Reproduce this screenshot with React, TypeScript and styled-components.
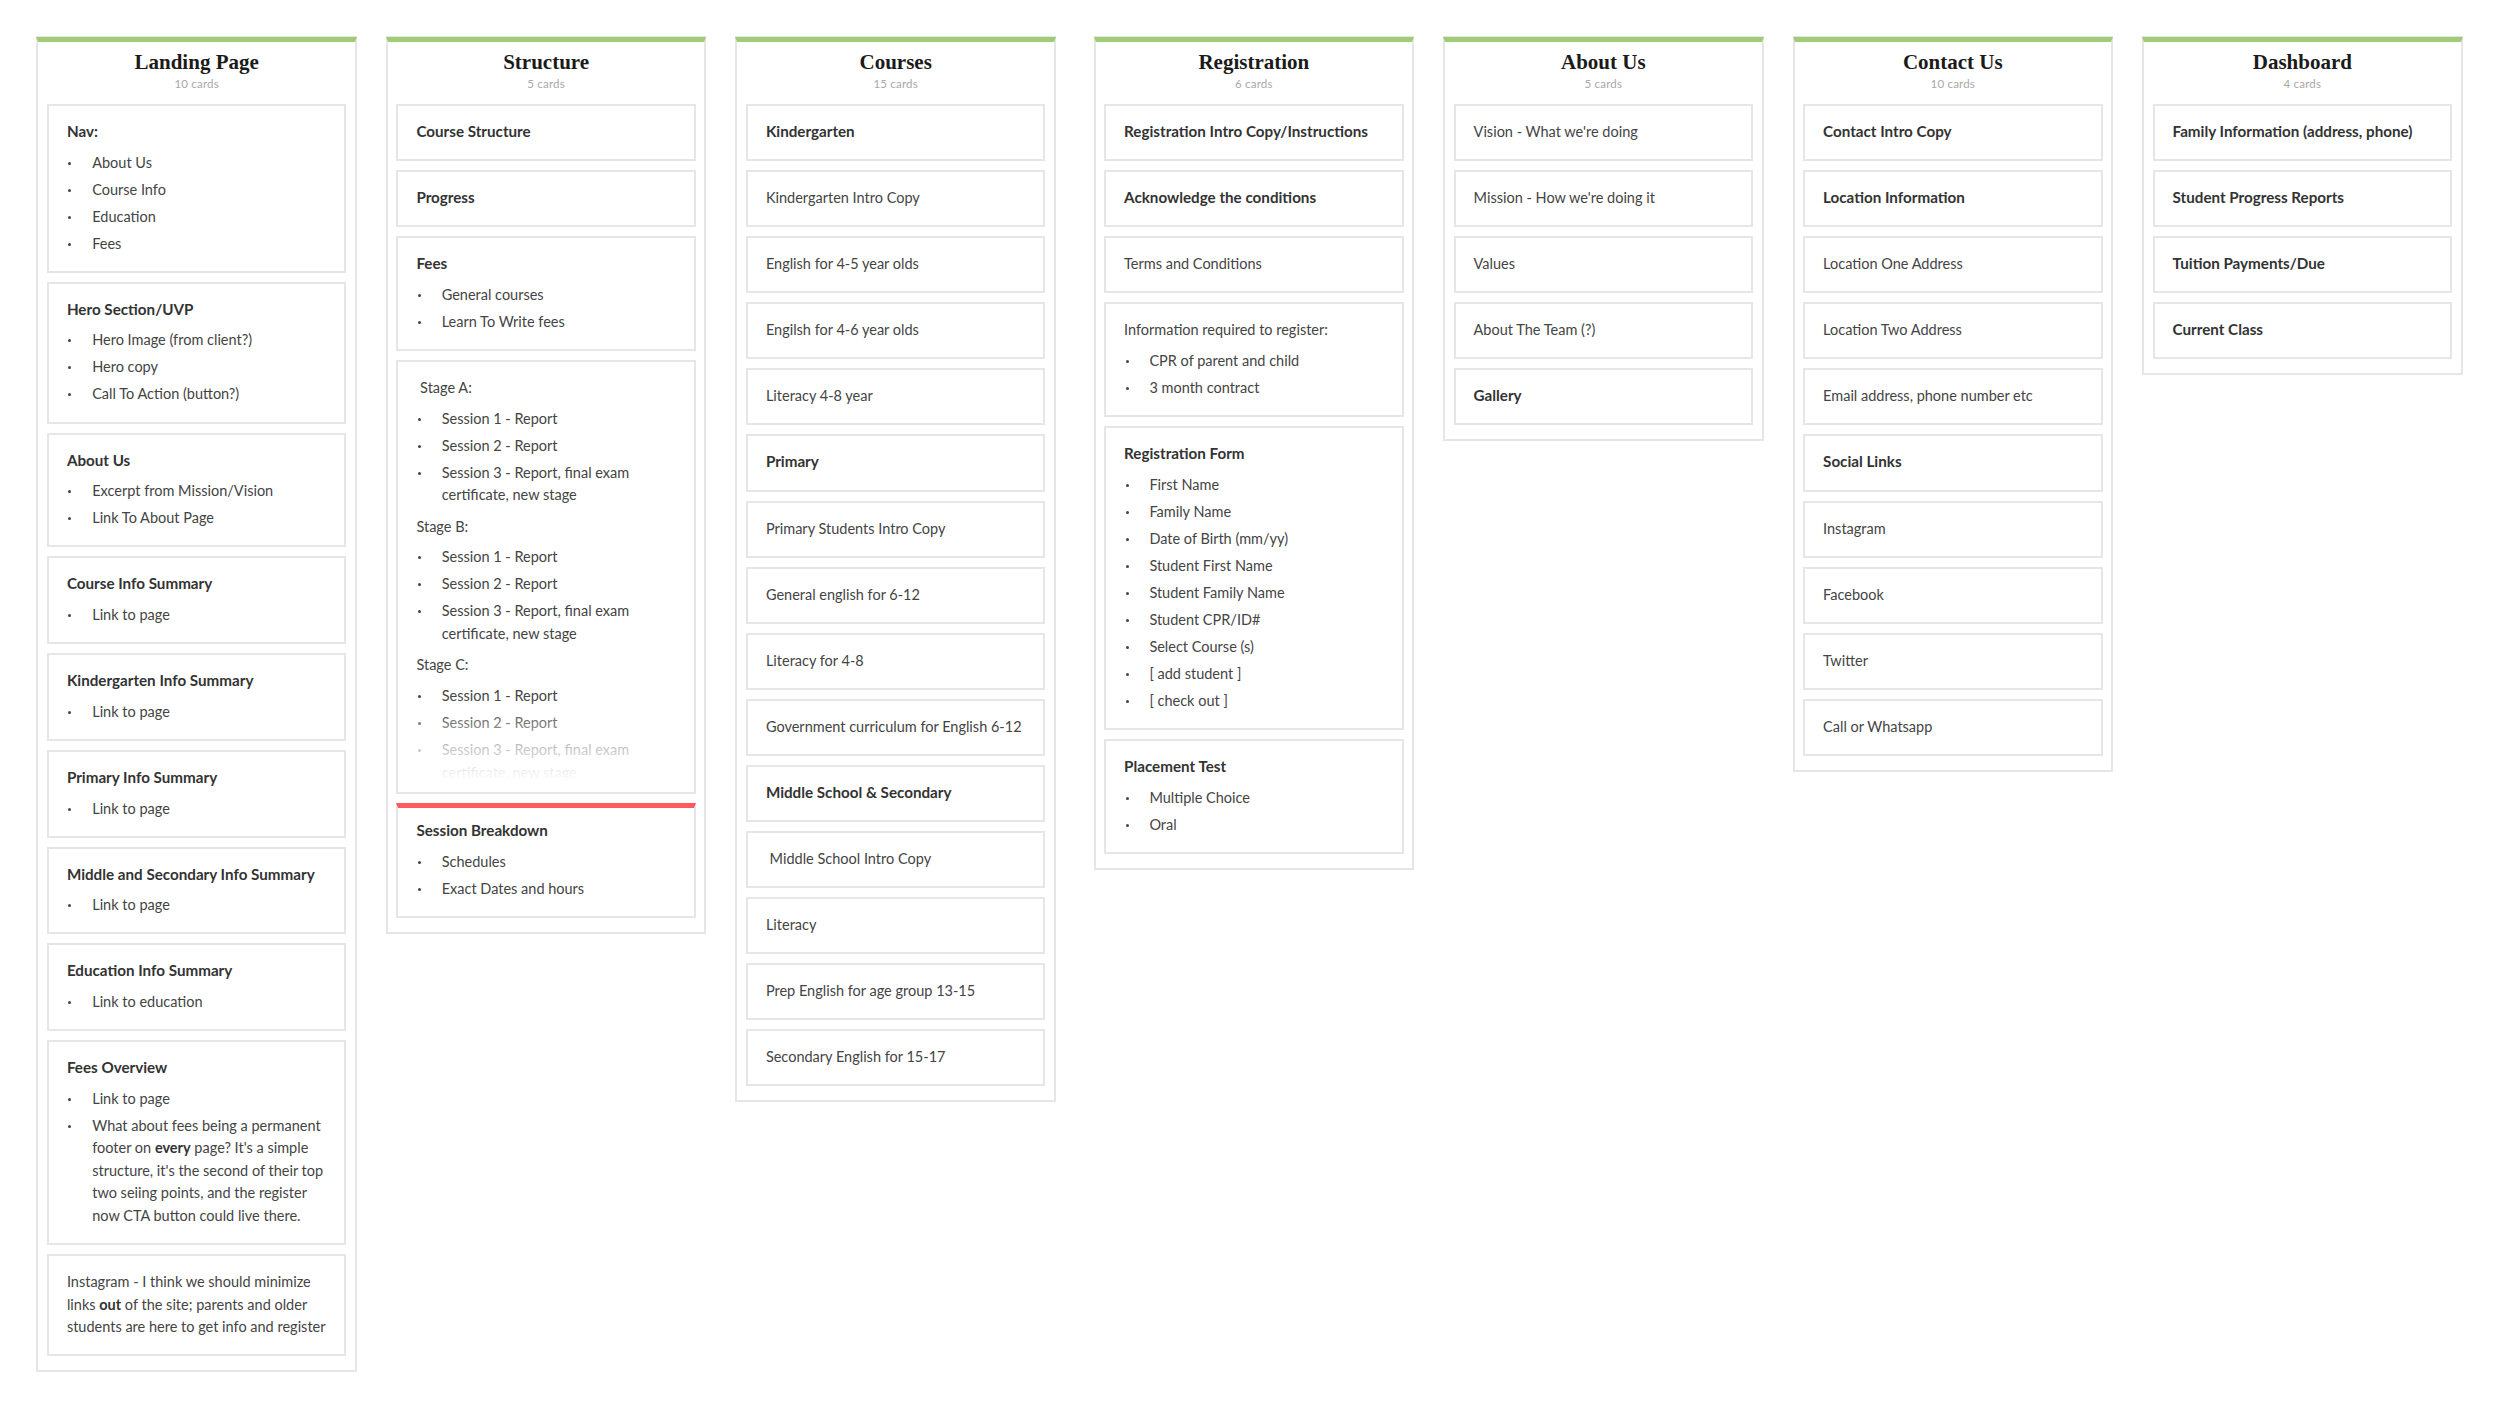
import React from 'react';
import styled, { createGlobalStyle } from 'styled-components';

type CardData = {
  title?: string;
  items?: React.ReactNode[];
  text?: React.ReactNode;
  stages?: { name: string; items: string[] }[];
  flagged?: boolean;
};

type ListData = {
  name: string;
  count: string;
  cards: CardData[];
  wide?: boolean;
};

const linkToPage = ['Link to page'];
const stageItems = ['Session 1 - Report', 'Session 2 - Report', 'Session 3 - Report, final exam certificate, new stage'];

const lists: ListData[] = [
  {
    name: 'Landing Page',
    count: '10 cards',
    cards: [
      { title: 'Nav:', items: ['About Us', 'Course Info', 'Education', 'Fees'] },
      { title: 'Hero Section/UVP', items: ['Hero Image (from client?)', 'Hero copy', 'Call To Action (button?)'] },
      { title: 'About Us', items: ['Excerpt from Mission/Vision', 'Link To About Page'] },
      { title: 'Course Info Summary', items: linkToPage },
      { title: 'Kindergarten Info Summary', items: linkToPage },
      { title: 'Primary Info Summary', items: linkToPage },
      { title: 'Middle and Secondary Info Summary', items: linkToPage },
      { title: 'Education Info Summary', items: ['Link to education'] },
      {
        title: 'Fees Overview',
        items: [
          'Link to page',
          <>
            What about fees being a permanent footer on <b>every</b> page? It's a simple structure, it's the second of
            their top two seiing points, and the register now CTA button could live there.
          </>,
        ],
      },
      {
        text: (
          <>
            Instagram - I think we should minimize links <b>out</b> of the site; parents and older students are here to
            get info and register
          </>
        ),
      },
    ],
  },
  {
    name: 'Structure',
    count: '5 cards',
    cards: [
      { title: 'Course Structure' },
      { title: 'Progress' },
      { title: 'Fees', items: ['General courses', 'Learn To Write fees'] },
      {
        stages: [
          { name: '\u00a0Stage A:', items: stageItems },
          { name: 'Stage B:', items: stageItems },
          { name: 'Stage C:', items: stageItems },
        ],
      },
      { title: 'Session Breakdown', items: ['Schedules', 'Exact Dates and hours'], flagged: true },
    ],
  },
  {
    name: 'Courses',
    count: '15 cards',
    wide: true,
    cards: [
      { title: 'Kindergarten' },
      { text: 'Kindergarten Intro Copy' },
      { text: 'English for 4-5 year olds' },
      { text: 'Engilsh for 4-6 year olds' },
      { text: 'Literacy 4-8 year' },
      { title: 'Primary' },
      { text: 'Primary Students Intro Copy' },
      { text: 'General english for 6-12' },
      { text: 'Literacy for 4-8' },
      { text: 'Government curriculum for English 6-12' },
      { title: 'Middle School & Secondary' },
      { text: '\u00a0Middle School Intro Copy' },
      { text: 'Literacy' },
      { text: 'Prep English for age group 13-15' },
      { text: 'Secondary English for 15-17' },
    ],
  },
  {
    name: 'Registration',
    count: '6 cards',
    cards: [
      { title: 'Registration Intro Copy/Instructions' },
      { title: 'Acknowledge the conditions' },
      { text: 'Terms and Conditions' },
      { text: 'Information required to register:', items: ['CPR of parent and child', '3 month contract'] },
      {
        title: 'Registration Form',
        items: [
          'First Name',
          'Family Name',
          'Date of Birth (mm/yy)',
          'Student First Name',
          'Student Family Name',
          'Student CPR/ID#',
          'Select Course (s)',
          '[ add student ]',
          '[ check out ]',
        ],
      },
      { title: 'Placement Test', items: ['Multiple Choice', 'Oral'] },
    ],
  },
  {
    name: 'About Us',
    count: '5 cards',
    cards: [
      { text: "Vision - What we're doing" },
      { text: "Mission - How we're doing it" },
      { text: 'Values' },
      { text: 'About The Team (?)' },
      { title: 'Gallery' },
    ],
  },
  {
    name: 'Contact Us',
    count: '10 cards',
    cards: [
      { title: 'Contact Intro Copy' },
      { title: 'Location Information' },
      { text: 'Location One Address' },
      { text: 'Location Two Address' },
      { text: 'Email address, phone number etc' },
      { title: 'Social Links' },
      { text: 'Instagram' },
      { text: 'Facebook' },
      { text: 'Twitter' },
      { text: 'Call or Whatsapp' },
    ],
  },
  {
    name: 'Dashboard',
    count: '4 cards',
    cards: [
      { title: 'Family Information (address, phone)' },
      { title: 'Student Progress Reports' },
      { title: 'Tuition Payments/Due' },
      { title: 'Current Class' },
    ],
  },
];

const BulletList = ({ items }: { items: React.ReactNode[] }) => (
  <Bullets>
    {items.map((item, i) => (
      <Bullet key={i}>{item}</Bullet>
    ))}
  </Bullets>
);

const ListCard = ({ card }: { card: CardData }) => {
  if (card.stages) {
    return (
      <ClippedCard>
        {card.stages.map((stage) => (
          <React.Fragment key={stage.name}>
            <Line>{stage.name}</Line>
            <BulletList items={stage.items} />
          </React.Fragment>
        ))}
        <Fade />
      </ClippedCard>
    );
  }
  return (
    <Card $flagged={card.flagged}>
      {card.title && <CardTitle>{card.title}</CardTitle>}
      {card.text && <Line>{card.text}</Line>}
      {card.items && <BulletList items={card.items} />}
    </Card>
  );
};

const App = () => (
  <>
    <GlobalStyle />
    <Board>
      {lists.map((list) => (
        <Column key={list.name} $wide={list.wide}>
          <ColumnName>{list.name}</ColumnName>
          <CardCount>{list.count}</CardCount>
          <Cards>
            {list.cards.map((card, i) => (
              <ListCard key={i} card={card} />
            ))}
          </Cards>
        </Column>
      ))}
    </Board>
  </>
);

export default App;

const GlobalStyle = createGlobalStyle`
  html, body {
    margin: 0;
    padding: 0;
    background: #fff;
  }
  body {
    font-family: 'Lato', 'Noto Sans', sans-serif;
    color: #444;
  }
  b {
    font-weight: 700;
    color: #333;
  }
`;

const Board = styled.div`
  display: flex;
  align-items: flex-start;
  gap: 29px;
  padding: 37px 36.4px 0;
  min-height: 1372px;
`;

const Column = styled.section<{ $wide?: boolean }>`
  flex: 0 0 320.5px;
  box-sizing: border-box;
  border: 2px solid #e6e6e6;
  border-top: 5px solid #a0cc78;
  box-shadow: 0 -1px 0 #e6e6e6;
  padding: 7px 8.5px 14px;
  margin-right: ${(p) => (p.$wide ? '8.7px' : '0')};
`;

const ColumnName = styled.h2`
  margin: 0;
  font-family: 'Liberation Serif', serif;
  font-size: 21px;
  font-weight: 700;
  line-height: 27px;
  text-align: center;
  color: #1b1b1b;
`;

const CardCount = styled.div`
  font-size: 11.5px;
  line-height: 16px;
  letter-spacing: 0.2px;
  text-align: center;
  color: #a8a8a8;
`;

const Cards = styled.div`
  display: flex;
  flex-direction: column;
  gap: 9px;
  margin-top: 12px;
`;

const Card = styled.article<{ $flagged?: boolean }>`
  box-sizing: border-box;
  border: 2px solid #e6e6e6;
  border-top: ${(p) => (p.$flagged ? '5px solid #ff5a60' : '2px solid #e6e6e6')};
  padding: ${(p) => (p.$flagged ? '12px' : '15px')} 18px 15.6px;
  font-size: 14.5px;
  line-height: 22.5px;
`;

const ClippedCard = styled(Card)`
  position: relative;
  height: 434px;
  overflow: hidden;
`;

const Fade = styled.div`
  position: absolute;
  left: 0;
  right: 0;
  bottom: 0;
  height: 95px;
  background: linear-gradient(
    to bottom,
    rgba(255, 255, 255, 0),
    rgba(255, 255, 255, 0.25) 25%,
    rgba(255, 255, 255, 0.65) 50%,
    rgba(255, 255, 255, 0.88) 75%,
    #fff 90%
  );
`;

const CardTitle = styled.div`
  font-size: 15.2px;
  font-weight: 700;
  line-height: 21.5px;
  padding-bottom: 1px;
  color: #333;
`;

const Line = styled.div``;

const Bullets = styled.ul`
  list-style: none;
  margin: 8.2px 0 9px;
  padding: 0;

  &:last-child {
    margin-bottom: 0;
  }
`;

const Bullet = styled.li`
  position: relative;
  padding-left: 25.3px;
  margin-bottom: 4.5px;

  &:last-child {
    margin-bottom: 0;
  }

  &::before {
    content: '';
    position: absolute;
    left: 1.5px;
    top: 10px;
    width: 3px;
    height: 3px;
    border-radius: 50%;
    background: #444;
  }
`;
